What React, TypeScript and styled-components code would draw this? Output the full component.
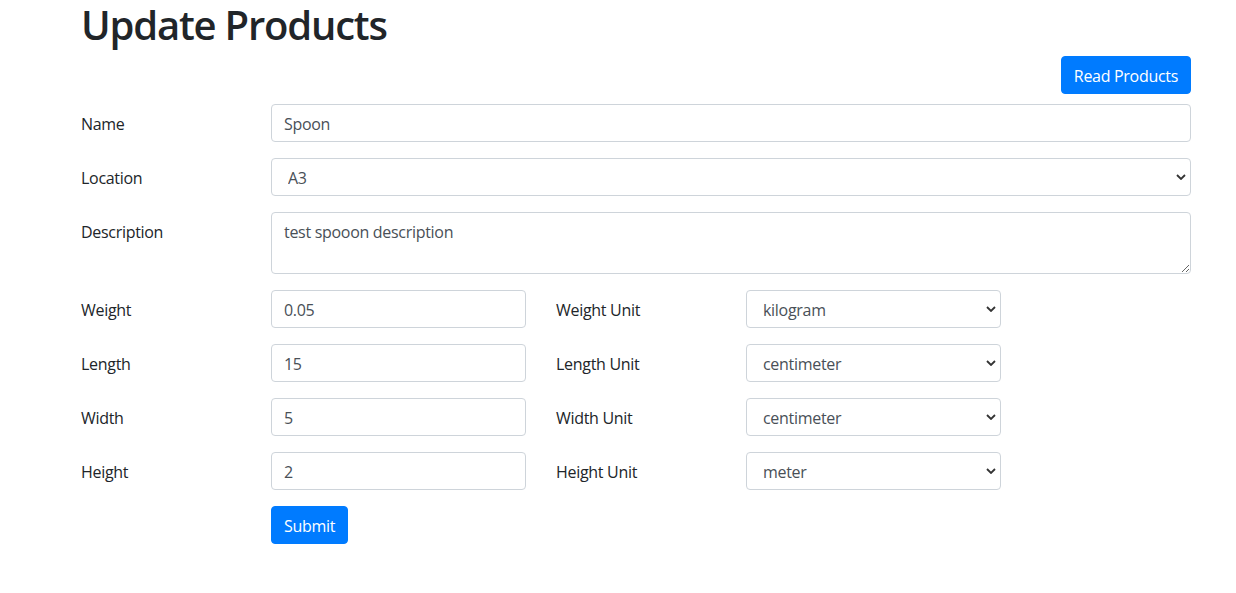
import React from 'react';
import styled, { createGlobalStyle } from 'styled-components';

const GlobalStyle = createGlobalStyle`
  body {
    margin: 0;
    background: #fff;
    font-family: "Segoe UI", "Open Sans", "Noto Sans", sans-serif;
    font-size: 16px;
    line-height: 1.5;
    color: #212529;
    letter-spacing: -0.3px;
  }
  * { box-sizing: border-box; }
`;

interface FieldProps {
  label: string;
  value: string;
  kind?: 'input' | 'select' | 'textarea';
  options?: string[];
}

const Field: React.FC<FieldProps> = ({ label, value, kind = 'input', options }) => (
  <>
    <Label>{label}</Label>
    {kind === 'input' && <Input defaultValue={value} />}
    {kind === 'textarea' && <TextArea rows={2} defaultValue={value} />}
    {kind === 'select' && (
      <SelectWrap>
        <Select defaultValue={value}>
          {(options || [value]).map((o) => (
            <option key={o} value={o}>
              {o}
            </option>
          ))}
        </Select>
        <Chevron viewBox="0 0 10 6" width="10" height="6">
          <path d="M1 1 L5 5 L9 1" fill="none" stroke="#333" strokeWidth="1.8" />
        </Chevron>
      </SelectWrap>
    )}
  </>
);

const units = {
  weight: ['gram', 'kilogram'],
  length: ['millimeter', 'centimeter', 'meter'],
};

const dims = [
  { label: 'Weight', value: '0.05', unit: 'kilogram', opts: units.weight },
  { label: 'Length', value: '15', unit: 'centimeter', opts: units.length },
  { label: 'Width', value: '5', unit: 'centimeter', opts: units.length },
  { label: 'Height', value: '2', unit: 'meter', opts: units.length },
];

export default function App() {
  return (
    <>
      <GlobalStyle />
      <Container>
        <Title>Update Products</Title>
        <TopBar>
          <Button>Read Products</Button>
        </TopBar>
        <Form onSubmit={(e) => e.preventDefault()}>
          <FullRow>
            <Field label="Name" value="Spoon" />
          </FullRow>
          <FullRow>
            <Field label="Location" value="A3" kind="select" options={['A1', 'A2', 'A3']} />
          </FullRow>
          <FullRow>
            <Field label="Description" value="test spooon description" kind="textarea" />
          </FullRow>
          {dims.map((d) => (
            <HalfRow key={d.label}>
              <Field label={d.label} value={d.value} />
              <Field label={`${d.label} Unit`} value={d.unit} kind="select" options={d.opts} />
            </HalfRow>
          ))}
          <FullRow>
            <span />
            <div>
              <Button type="submit">Submit</Button>
            </div>
          </FullRow>
        </Form>
      </Container>
    </>
  );
}

const Container = styled.div`
  width: 1110px;
  margin-left: 81px;
`;

const Title = styled.h1`
  margin: 0 0 8px;
  padding-top: 1px;
  height: 48px;
  font-size: 40px;
  font-weight: 600;
  line-height: 1.2;
  letter-spacing: -1.2px;
  color: #212529;
`;

const TopBar = styled.div`
  display: flex;
  justify-content: flex-end;
  margin-bottom: 10px;
`;

const Button = styled.button`
  display: inline-block;
  height: 38px;
  font-family: inherit;
  font-size: 16px;
  letter-spacing: inherit;
  line-height: 1.5;
  padding: 7px 12px 5px;
  color: #fff;
  background: #007bff;
  border: 1px solid #007bff;
  border-radius: 4px;
  cursor: pointer;
`;

const Form = styled.form`
  display: flex;
  flex-direction: column;
  gap: 16px;
`;

const FullRow = styled.div`
  display: grid;
  grid-template-columns: 160px 920px;
  column-gap: 30px;
`;

const HalfRow = styled.div`
  display: grid;
  grid-template-columns: 160px 255px 160px 255px;
  column-gap: 30px;
`;

const Label = styled.label`
  padding-top: 8px;
  padding-bottom: 6px;
  font-size: 16px;
  line-height: 1.5;
  color: #212529;
`;

const controlBase = `
  display: block;
  width: 100%;
  font-family: inherit;
  font-size: 16px;
  letter-spacing: inherit;
  line-height: 1.5;
  color: #495057;
  background: #fff;
  border: 1px solid #ced4da;
  border-radius: 4px;
  outline: none;
`;

const Input = styled.input`
  ${controlBase}
  height: 38px;
  padding: 7px 12px 5px;
`;

const TextArea = styled.textarea`
  ${controlBase}
  height: 62px;
  padding: 7px 12px 5px;
  resize: vertical;
`;

const SelectWrap = styled.div`
  position: relative;
`;

const Select = styled.select`
  ${controlBase}
  height: 38px;
  padding: 7px 30px 5px 16px;
  appearance: none;
  -webkit-appearance: none;
`;

const Chevron = styled.svg`
  position: absolute;
  right: 5px;
  top: 16px;
  pointer-events: none;
`;
